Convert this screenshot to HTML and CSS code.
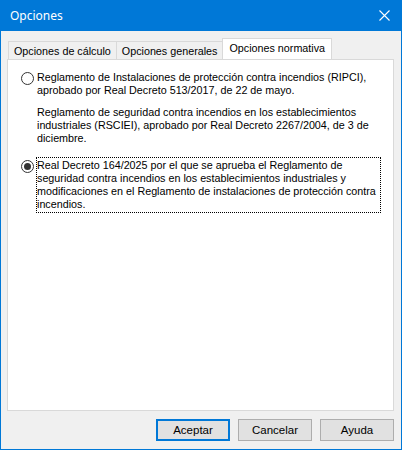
FILE: index.html
```html
<!DOCTYPE html>
<html lang="es">
<head>
    <meta charset="UTF-8">
    <title>Opciones</title>
    <link rel="stylesheet" href="styles.css">
</head>
<body>
    <div class="window">
        <div class="titlebar">
            <span class="title">Opciones</span>
            <svg class="close" width="11" height="11" viewBox="0 0 11 11">
                <path d="M0.5 0.5 L10.5 10.5 M10.5 0.5 L0.5 10.5" stroke="#fff" stroke-width="1.1" fill="none"/>
            </svg>
        </div>

        <div class="client">
            <div class="tabs">
                <div class="tab">Opciones de cálculo</div>
                <div class="tab">Opciones generales</div>
                <div class="tab active">Opciones normativa</div>
            </div>

            <div class="panel">
                <label class="option">
                    <span class="radio"></span>
                    <span class="text">Reglamento de Instalaciones de protección contra incendios (RIPCI), aprobado por Real Decreto 513/2017, de 22 de mayo.</span>
                </label>
                <p class="note">Reglamento de seguridad contra incendios en los establecimientos industriales (RSCIEI), aprobado por Real Decreto 2267/2004, de 3 de diciembre.</p>
                <label class="option">
                    <span class="radio checked"></span>
                    <span class="text focused">Real Decreto 164/2025 por el que se aprueba el Reglamento de seguridad contra incendios en los establecimientos industriales y modificaciones en el Reglamento de instalaciones de protección contra incendios.</span>
                </label>
            </div>

            <div class="buttons">
                <button class="default">Aceptar</button>
                <button>Cancelar</button>
                <button>Ayuda</button>
            </div>
        </div>
    </div>
</body>
</html>
```

FILE: styles.css
```css
body {
    margin: 0;
    font-family: 'Liberation Sans', Arial, sans-serif;
    font-size: 10.75px;
    color: #000;
}

.window {
    width: 402px;
    height: 450px;
    box-sizing: border-box;
    border: 1px solid #0078d7;
    border-top: none;
    background-color: #f0f0f0;
    display: flex;
    flex-direction: column;
}

.titlebar {
    height: 31px;
    background-color: #0078d7;
    display: flex;
    align-items: center;
    justify-content: space-between;
    padding: 0 10px 0 9px;
    flex-shrink: 0;
}

.title {
    font-family: 'Noto Sans', sans-serif;
    font-size: 12px;
    color: #fff;
}

.close {
    margin-right: 1px;
}

.client {
    flex: 1;
    display: flex;
    flex-direction: column;
    padding: 7px 7px 7px 6px;
}

.tabs {
    display: flex;
    align-items: flex-end;
    height: 21px;
    padding-left: 1px;
}

.tab {
    height: 17px;
    line-height: 18px;
    padding: 0 5px;
    background-color: #f0f0f0;
    border: 1px solid #d9d9d9;
    border-bottom: none;
    margin-right: -1px;
    font-size: 10.75px;
}

.tab.active {
    height: 21px;
    line-height: 19px;
    margin-bottom: -1px;
    padding: 0 6px;
    background-color: #fff;
}

.panel {
    height: 352px;
    box-sizing: border-box;
    background-color: #fff;
    border: 1px solid #d9d9d9;
    padding: 11px 13px 0 13px;
}

.option {
    display: flex;
    align-items: flex-start;
}

.radio {
    width: 11px;
    height: 11px;
    border: 1px solid #333;
    border-radius: 50%;
    flex-shrink: 0;
    margin-top: 1px;
    margin-right: 3px;
    display: flex;
    align-items: center;
    justify-content: center;
}

.radio.checked::after {
    content: '';
    width: 7px;
    height: 7px;
    border-radius: 50%;
    background-color: #333;
}

.text {
    line-height: 13px;
}

.text.focused {
    flex: 1;
    outline: 1px dotted #000;
    margin-top: -1px;
    padding: 1px 1px 1px 0;
}

.note {
    margin: 9px 0 14px 16px;
    line-height: 13px;
}

.buttons {
    display: flex;
    justify-content: flex-end;
    gap: 8px;
    margin-top: 8px;
}

button {
    width: 74px;
    height: 22px;
    background-color: #e1e1e1;
    border: 1px solid #adadad;
    font-family: 'Liberation Sans', Arial, sans-serif;
    font-size: 11.5px;
    color: #000;
    padding: 0;
}

button.default {
    border: 2px solid #0078d7;
}
```
